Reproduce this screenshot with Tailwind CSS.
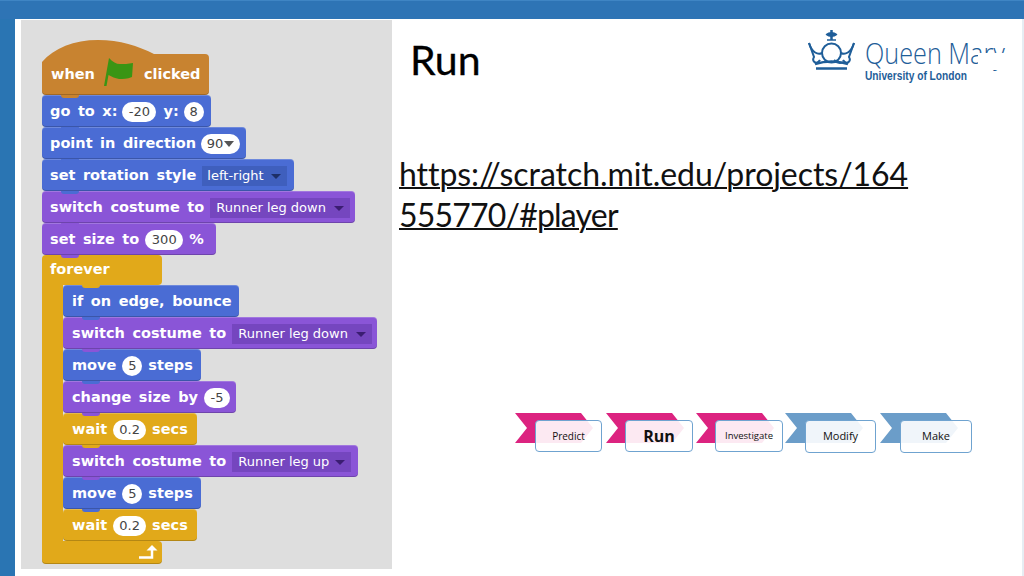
<!DOCTYPE html>
<html>
<head>
<meta charset="utf-8">
<title>Run</title>
<script src="https://cdn.jsdelivr.net/npm/@tailwindcss/browser@4"></script>
</head>
<body class="w-[1024px] h-[576px] overflow-hidden bg-white font-['Lato',sans-serif]">
<!-- top bar -->
<div class="h-[19px] bg-[#2e74b5] border-t border-[#3f85c4]"></div>
<div class="flex h-[557px]">
    <div class="w-[15px] bg-[#2a75b3]"></div>
    <!-- scratch panel -->
    <div class="ml-[6px] mt-px w-[371px] h-[549px] bg-[#dedede] pl-[21px] pt-[20px] font-['DejaVu_Sans',sans-serif] text-[14.500px] font-bold text-white [word-spacing:2.500px]">
        <!-- hat -->
        <svg class="block" width="167" height="22" viewBox="0 0 167 22"><path d="M0 22 C12 8 32 0 56 0 C78 0 96 6 112 14 H163 Q167 14 167 18 V22 Z" fill="#c88330"/></svg>
        <div class="relative z-[8] flex items-center w-[167px] h-[33px] pl-[9px] pb-[7px] bg-[#c88330] rounded-b-[4px] shadow-[inset_0_-1px_0_rgba(0,0,0,.2)]">
            <span>when</span>
            <svg class="absolute left-[62px] -top-[5px]" width="30" height="30" viewBox="0 0 30 30"><path d="M0 29 L5 1 C9 5 12 7 16 7 C20 7 24 7 29 6 L28 20 C23 22 19 22 15 22 C11 21 8 20 4.500 18 L2.500 29 Z" fill="#3a9514"/></svg>
            <span class="ml-[49px]">clicked</span>
            <i class="absolute left-[19px] -bottom-[3px] w-[18px] h-[3px] bg-[#c88330] rounded-b-[3px]"></i>
        </div>
        <!-- motion / looks -->
        <div class="relative z-[7] flex items-center gap-[5px] w-[169px] h-[32px] pl-[8px] pt-[2px] bg-[#4a6cd4] rounded-[4px] shadow-[inset_0_1px_0_rgba(255,255,255,.2),inset_0_-1px_0_rgba(0,0,0,.2)]">
            <span>go to x:</span>
            <span class="flex items-center justify-center w-[34px] h-[20px] rounded-full bg-white text-[13px] font-normal text-[#444]">-20</span>
            <span class="ml-[2px]">y:</span>
            <span class="flex items-center justify-center w-[20px] h-[20px] rounded-full bg-white text-[13px] font-normal text-[#444]">8</span>
            <i class="absolute left-[19px] -bottom-[3px] w-[18px] h-[3px] bg-[#4a6cd4] rounded-b-[3px]"></i>
        </div>
        <div class="relative z-[6] flex items-center gap-[5px] w-[204px] h-[32px] pl-[8px] pt-[2px] bg-[#4a6cd4] rounded-[4px] shadow-[inset_0_1px_0_rgba(255,255,255,.2),inset_0_-1px_0_rgba(0,0,0,.2)]">
            <span>point in direction</span>
            <span class="flex items-center justify-center gap-[1px] w-[39px] h-[20px] rounded-full bg-white text-[13px] font-normal text-[#444]">90<i class="w-0 h-0 border-x-[5px] border-t-[6px] border-x-transparent border-t-[#555]"></i></span>
            <i class="absolute left-[19px] -bottom-[3px] w-[18px] h-[3px] bg-[#4a6cd4] rounded-b-[3px]"></i>
        </div>
        <div class="relative z-[5] flex items-center gap-[6px] w-[252px] h-[32px] pl-[8px] pt-[2px] bg-[#4a6cd4] rounded-[4px] shadow-[inset_0_1px_0_rgba(255,255,255,.2),inset_0_-1px_0_rgba(0,0,0,.2)]">
            <span>set rotation style</span>
            <span class="flex items-center justify-between w-[85px] h-[20px] pl-[5px] pr-[6px] bg-[#3f5fbd] text-[13px] font-normal [word-spacing:0]">left-right<i class="w-0 h-0 border-x-[5px] border-t-[5px] border-x-transparent border-t-[#1d2f66]"></i></span>
            <i class="absolute left-[19px] -bottom-[3px] w-[18px] h-[3px] bg-[#4a6cd4] rounded-b-[3px]"></i>
        </div>
        <div class="relative z-[4] flex items-center gap-[6px] w-[313px] h-[32px] pl-[8px] pt-[2px] bg-[#8a55d7] rounded-[4px] shadow-[inset_0_1px_0_rgba(255,255,255,.2),inset_0_-1px_0_rgba(0,0,0,.2)]">
            <span>switch costume to</span>
            <span class="flex items-center justify-between w-[140px] h-[20px] pl-[6px] pr-[6px] bg-[#7546bf] text-[13px] font-normal [word-spacing:0]">Runner leg down<i class="w-0 h-0 border-x-[5px] border-t-[5px] border-x-transparent border-t-[#3b1d72]"></i></span>
            <i class="absolute left-[19px] -bottom-[3px] w-[18px] h-[3px] bg-[#8a55d7] rounded-b-[3px]"></i>
        </div>
        <div class="relative z-[3] flex items-center gap-[6px] w-[174px] h-[32px] pl-[8px] pt-[2px] bg-[#8a55d7] rounded-[4px] shadow-[inset_0_1px_0_rgba(255,255,255,.2),inset_0_-1px_0_rgba(0,0,0,.2)]">
            <span>set size to</span>
            <span class="flex items-center justify-center w-[38px] h-[20px] rounded-full bg-white text-[13px] font-normal text-[#444]">300</span>
            <span>%</span>
            <i class="absolute left-[19px] -bottom-[3px] w-[18px] h-[3px] bg-[#8a55d7] rounded-b-[3px]"></i>
        </div>
        <!-- forever -->
        <div class="relative z-[2] flex items-center w-[120px] h-[30px] pl-[8px] bg-[#e1a91a] rounded-t-[4px] rounded-br-[4px]">forever</div>
        <div class="border-l-[21px] border-[#e1a91a] flex flex-col">
            <div class="relative z-[9] flex items-center w-[176px] h-[32px] pl-[9px] pt-[2px] bg-[#4a6cd4] rounded-[4px] shadow-[inset_0_1px_0_rgba(255,255,255,.2),inset_0_-1px_0_rgba(0,0,0,.2)]">
                <span>if on edge, bounce</span>
                <i class="absolute left-[19px] top-0 w-[18px] h-[3px] bg-[#e1a91a] rounded-b-[3px]"></i>
                <i class="absolute left-[19px] -bottom-[3px] w-[18px] h-[3px] bg-[#4a6cd4] rounded-b-[3px]"></i>
            </div>
            <div class="relative z-[8] flex items-center gap-[6px] w-[314px] h-[32px] pl-[9px] pt-[2px] bg-[#8a55d7] rounded-[4px] shadow-[inset_0_1px_0_rgba(255,255,255,.2),inset_0_-1px_0_rgba(0,0,0,.2)]">
                <span>switch costume to</span>
                <span class="flex items-center justify-between w-[140px] h-[20px] pl-[6px] pr-[6px] bg-[#7546bf] text-[13px] font-normal [word-spacing:0]">Runner leg down<i class="w-0 h-0 border-x-[5px] border-t-[5px] border-x-transparent border-t-[#3b1d72]"></i></span>
                <i class="absolute left-[19px] -bottom-[3px] w-[18px] h-[3px] bg-[#8a55d7] rounded-b-[3px]"></i>
            </div>
            <div class="relative z-[7] flex items-center gap-[6px] w-[138px] h-[32px] pl-[9px] pt-[2px] bg-[#4a6cd4] rounded-[4px] shadow-[inset_0_1px_0_rgba(255,255,255,.2),inset_0_-1px_0_rgba(0,0,0,.2)]">
                <span>move</span>
                <span class="flex items-center justify-center w-[20px] h-[20px] rounded-full bg-white text-[13px] font-normal text-[#444]">5</span>
                <span>steps</span>
                <i class="absolute left-[19px] -bottom-[3px] w-[18px] h-[3px] bg-[#4a6cd4] rounded-b-[3px]"></i>
            </div>
            <div class="relative z-[6] flex items-center gap-[6px] w-[173px] h-[32px] pl-[9px] pt-[2px] bg-[#8a55d7] rounded-[4px] shadow-[inset_0_1px_0_rgba(255,255,255,.2),inset_0_-1px_0_rgba(0,0,0,.2)]">
                <span>change size by</span>
                <span class="flex items-center justify-center w-[26px] h-[20px] rounded-full bg-white text-[13px] font-normal text-[#444]">-5</span>
                <i class="absolute left-[19px] -bottom-[3px] w-[18px] h-[3px] bg-[#8a55d7] rounded-b-[3px]"></i>
            </div>
            <div class="relative z-[5] flex items-center gap-[6px] w-[134px] h-[32px] pl-[9px] pt-[2px] bg-[#e1a91a] rounded-[4px] shadow-[inset_0_1px_0_rgba(255,255,255,.2),inset_0_-1px_0_rgba(0,0,0,.2)]">
                <span>wait</span>
                <span class="flex items-center justify-center w-[33px] h-[20px] rounded-full bg-white text-[13px] font-normal text-[#444]">0.2</span>
                <span>secs</span>
                <i class="absolute left-[19px] -bottom-[3px] w-[18px] h-[3px] bg-[#e1a91a] rounded-b-[3px]"></i>
            </div>
            <div class="relative z-[4] flex items-center gap-[6px] w-[295px] h-[32px] pl-[9px] pt-[2px] bg-[#8a55d7] rounded-[4px] shadow-[inset_0_1px_0_rgba(255,255,255,.2),inset_0_-1px_0_rgba(0,0,0,.2)]">
                <span>switch costume to</span>
                <span class="flex items-center justify-between w-[119px] h-[20px] pl-[6px] pr-[6px] bg-[#7546bf] text-[13px] font-normal [word-spacing:0]">Runner leg up<i class="w-0 h-0 border-x-[5px] border-t-[5px] border-x-transparent border-t-[#3b1d72]"></i></span>
                <i class="absolute left-[19px] -bottom-[3px] w-[18px] h-[3px] bg-[#8a55d7] rounded-b-[3px]"></i>
            </div>
            <div class="relative z-[3] flex items-center gap-[6px] w-[138px] h-[32px] pl-[9px] pt-[2px] bg-[#4a6cd4] rounded-[4px] shadow-[inset_0_1px_0_rgba(255,255,255,.2),inset_0_-1px_0_rgba(0,0,0,.2)]">
                <span>move</span>
                <span class="flex items-center justify-center w-[20px] h-[20px] rounded-full bg-white text-[13px] font-normal text-[#444]">5</span>
                <span>steps</span>
                <i class="absolute left-[19px] -bottom-[3px] w-[18px] h-[3px] bg-[#4a6cd4] rounded-b-[3px]"></i>
            </div>
            <div class="relative z-[2] flex items-center gap-[6px] w-[134px] h-[32px] pl-[9px] pt-[2px] bg-[#e1a91a] rounded-[4px] shadow-[inset_0_1px_0_rgba(255,255,255,.2),inset_0_-1px_0_rgba(0,0,0,.2)]">
                <span>wait</span>
                <span class="flex items-center justify-center w-[33px] h-[20px] rounded-full bg-white text-[13px] font-normal text-[#444]">0.2</span>
                <span>secs</span>
                <i class="absolute left-[19px] -bottom-[3px] w-[18px] h-[3px] bg-[#e1a91a] rounded-b-[3px]"></i>
            </div>
        </div>
        <div class="flex items-center justify-end w-[120px] h-[23px] pr-[3px] bg-[#e1a91a] rounded-b-[4px] rounded-tr-[4px] shadow-[inset_0_-1px_0_rgba(0,0,0,.2)]">
            <svg width="20" height="18" viewBox="0 0 20 18"><path d="M0 13.500 H13 V6" fill="none" stroke="#fff" stroke-width="2.500"/><path d="M7.500 6.500 L13 1 L18.500 6.500 Z" fill="#fff"/></svg>
        </div>
    </div>
    <!-- slide content -->
    <div class="relative flex-1 min-w-0 text-black border-r-2 border-[#e6edf3]">
        <h1 class="ml-[18px] mt-[16px] h-[50px] text-[41px] leading-[50px] font-['Lato',sans-serif] [-webkit-text-stroke:0.3px_black]">Run</h1>
        <!-- logo -->
        <div class="absolute left-[416px] top-[9px] flex items-start gap-[9px] w-[196px] h-[56px]">
            <svg class="shrink-0 mt-px" width="48" height="41" viewBox="0 0 48 41" fill="none" stroke="#1f5e99" stroke-width="2">
                <path d="M23.500 1 V11" stroke-width="2.500"/>
                <path d="M19 5.500 C21 3.500 26 3.500 28 5.500 C26 7.500 21 7.500 19 5.500 Z" fill="#1f5e99"/>
                <path d="M19 11 H28" stroke-width="1.500"/>
                <circle cx="23.500" cy="24" r="9.500"/>
                <path d="M26 31 C29 34 32 35 35 33"/>
                <path d="M1 14 L6 28 C3 33 9 36 12 31 M46 14 L41 28 C44 33 38 36 35 31"/>
                <path d="M1 14 C4 24 10 26 14 24 M46 14 C43 24 37 26 33 24"/>
                <path d="M7 35 C17 32 30 32 40 35" stroke-width="2.500"/>
                <path d="M8 39.500 H39" stroke-width="2.500"/>
            </svg>
            <div class="relative pt-[8px] font-['Open_Sans',sans-serif] text-[#1f5e99] whitespace-nowrap">
                <div class="h-[34px] origin-left scale-x-[.87] text-[29px] leading-[34px] font-light">Queen Mary</div>
                <div class="origin-left scale-x-[.85] text-[12px] leading-[12px] font-bold font-['Liberation_Sans',sans-serif]">University of London</div>
                <i class="absolute left-[113px] top-[25px] w-[30px] h-[17px] bg-white"></i>
            </div>
        </div>
        <a class="block ml-[7px] mt-[68px] text-[32px] leading-[41px] underline decoration-2 font-['Lato',sans-serif] whitespace-nowrap [font-variant-ligatures:none] text-[#111]" href="#"><span class="tracking-[-0.05px]">https://scratch.mit.edu/projects/164</span><br><span class="tracking-[-0.8px]">555770/#player</span></a>
        <!-- progress chevrons -->
        <div class="flex ml-[123px] mt-[178px] text-[#111] font-['Open_Sans',sans-serif]">
            <div class="relative w-[91px] h-[39px]">
                <svg class="absolute left-0 top-0" width="78" height="30" viewBox="0 0 78 30"><path d="M0 0 H66 L78 15 L66 30 H0 L12 15 Z" fill="#dc2380"/></svg>
                <div class="absolute left-[20px] top-[7px] flex items-center justify-center w-[67px] h-[32px] rounded-[4px] border border-[#6fa3d0] bg-white/90 text-[10px]">Predict</div>
            </div>
            <div class="relative w-[90px] h-[39px]">
                <svg class="absolute left-0 top-0" width="78" height="30" viewBox="0 0 78 30"><path d="M0 0 H66 L78 15 L66 30 H0 L12 15 Z" fill="#dc2380"/></svg>
                <div class="absolute left-[19px] top-[7px] flex items-center justify-center w-[68px] h-[32px] rounded-[4px] border border-[#6fa3d0] bg-white/90 text-[16px] font-bold">Run</div>
            </div>
            <div class="relative w-[89px] h-[39px]">
                <svg class="absolute left-0 top-0" width="78" height="30" viewBox="0 0 78 30"><path d="M0 0 H66 L78 15 L66 30 H0 L12 15 Z" fill="#dc2380"/></svg>
                <div class="absolute left-[19px] top-[7px] flex items-center justify-center w-[68px] h-[32px] rounded-[4px] border border-[#6fa3d0] bg-white/90 text-[9.500px]">Investigate</div>
            </div>
            <div class="relative w-[95px] h-[39px]">
                <svg class="absolute left-0 top-0" width="78" height="30" viewBox="0 0 78 30"><path d="M0 0 H66 L78 15 L66 30 H0 L12 15 Z" fill="#6b9dc9"/></svg>
                <div class="absolute left-[20px] top-[7px] flex items-center justify-center w-[71px] h-[33px] rounded-[4px] border border-[#6fa3d0] bg-white/90 text-[11px]">Modify</div>
            </div>
            <div class="relative w-[92px] h-[39px]">
                <svg class="absolute left-0 top-0" width="78" height="30" viewBox="0 0 78 30"><path d="M0 0 H66 L78 15 L66 30 H0 L12 15 Z" fill="#6b9dc9"/></svg>
                <div class="absolute left-[20px] top-[7px] flex items-center justify-center w-[72px] h-[33px] rounded-[4px] border border-[#6fa3d0] bg-white/90 text-[11px]">Make</div>
            </div>
        </div>
    </div>
</div>
</body>
</html>
